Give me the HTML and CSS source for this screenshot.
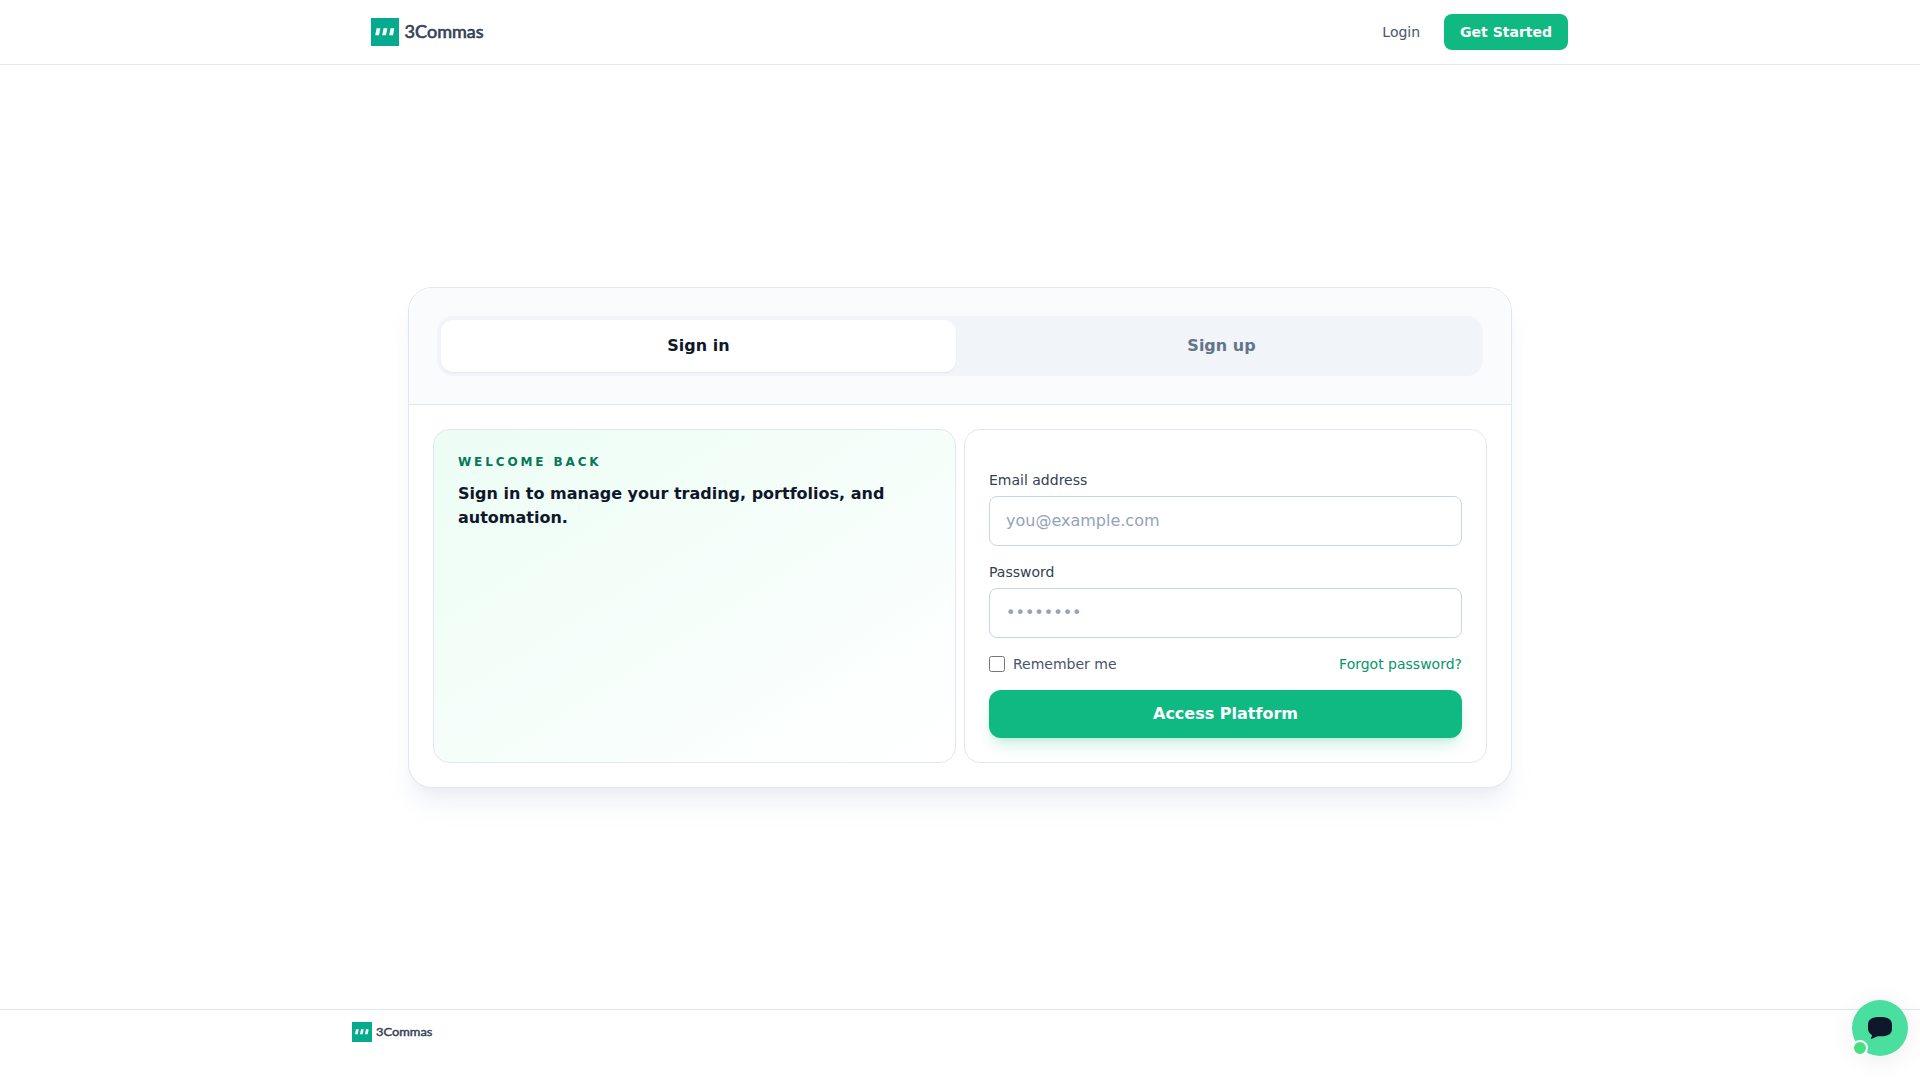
FILE: index.html
```html
<!DOCTYPE html>
<html lang="en">
<head>
<meta charset="utf-8">
<title>3Commas</title>
<link rel="stylesheet" href="styles.css">
</head>
<body>
<header class="topbar">
  <div class="container topbar-inner">
    <a class="brand">
      <svg class="brand-logo" viewBox="0 0 114 28">
        <rect width="28" height="28" fill="#05ab8c"/>
        <path d="M5.600 10.300h3.700l-1.300 6.900H4.200zM12.600 10.300h3.700l-1.300 6.900h-3.800zM19.600 10.300h3.700l-1.300 6.900h-3.800z" fill="#fff"/>
        <text x="33.600" y="20.200" textLength="79" lengthAdjust="spacingAndGlyphs">3Commas</text>
      </svg>
    </a>
    <nav class="nav">
      <a class="nav-link">Login</a>
      <a class="nav-cta">Get Started</a>
    </nav>
  </div>
</header>
<main class="main">
  <section class="card">
    <div class="card-head">
      <div class="tabs">
        <button class="tab tab-active">Sign in</button>
        <button class="tab">Sign up</button>
      </div>
    </div>
    <div class="card-body">
      <div class="panel welcome">
        <p class="eyebrow">Welcome back</p>
        <p class="welcome-title">Sign in to manage your trading, portfolios, and automation.</p>
      </div>
      <form class="panel form">
        <div class="field">
          <label for="email">Email address</label>
          <input class="input" id="email" type="email" placeholder="you@example.com">
        </div>
        <div class="field">
          <label for="password">Password</label>
          <input class="input" id="password" type="password" placeholder="••••••••">
        </div>
        <div class="options">
          <label class="remember"><input class="check" type="checkbox">Remember me</label>
          <a class="forgot">Forgot password?</a>
        </div>
        <button class="submit" type="button">Access Platform</button>
      </form>
    </div>
  </section>
</main>
<footer class="footer">
  <div class="container">
    <svg class="footer-logo" viewBox="0 0 114 28">
      <rect width="28" height="28" fill="#05ab8c"/>
      <path d="M5.600 10.300h3.700l-1.300 6.900H4.200zM12.600 10.300h3.700l-1.300 6.900h-3.800zM19.600 10.300h3.700l-1.300 6.900h-3.800z" fill="#fff"/>
      <text x="33.600" y="20.200" textLength="79" lengthAdjust="spacingAndGlyphs">3Commas</text>
    </svg>
  </div>
</footer>
<button class="chat" aria-label="Open chat">
  <svg class="chat-icon" viewBox="0 0 24 22"><path d="M12 0c8.500 0 12 2.500 12 8v3.500c0 5.500-4.200 7.800-10.500 7.800-1.800 0-3.300-.1-4.500.3-2 .6-3.300 2-5.300 2.200-.9.100-1.100-.8-.6-1.400.8-.9 1-1.600.8-2.400C1.400 16.600 0 14.500 0 11.500V8c0-5.500 3.500-8 12-8z" fill="#0f172a"/></svg>
  <span class="status"></span>
</button>
</body>
</html>
```
FILE: styles.css
```css
* { box-sizing: border-box; }
body {
  margin: 0;
  height: 1080px;
  display: flex;
  flex-direction: column;
  overflow: hidden;
  background: #fff;
  color: #0f172a;
  font: 16px/24px "DejaVu Sans", sans-serif;
}
p { margin: 0; }
button { border: 0; font: inherit; }
.container { width: 1280px; margin: 0 auto; padding: 0 32px; }
.topbar { height: 65px; border-bottom: 1px solid #e2e8f0; }
.topbar-inner { height: 64px; display: flex; align-items: center; justify-content: space-between; }
.brand { display: flex; margin-left: 18.500px; }
.brand-logo { width: 114px; height: 28px; }
.brand-logo text, .footer-logo text { font: 16.800px Lato, sans-serif; fill: #334155; stroke: #334155; stroke-width: .6px; }
.nav { display: flex; align-items: center; gap: 24px; font-size: 14px; line-height: 20px; }
.nav-link { color: #475569; }
.nav-cta { padding: 8px 16px; border-radius: 8px; background: #10b981; color: #fff; font-weight: 600; }
.main { flex: 1; display: flex; align-items: center; justify-content: center; }
.card {
  width: 1104px;
  margin-bottom: -1px;
  border: 1px solid #e2e8f0;
  border-radius: 24px;
  overflow: hidden;
  background: #fff;
  box-shadow: 0 20px 25px -5px rgba(226, 232, 240, .6), 0 8px 10px -6px rgba(226, 232, 240, .6);
}
.card-head { padding: 28px; background: #fafbfd; border-bottom: 1px solid #e2e8f0; }
.tabs { display: grid; grid-template-columns: 1fr 1fr; gap: 8px; padding: 4px; border-radius: 16px; background: #f1f5f9; }
.tab { height: 52px; border-radius: 12px; background: transparent; color: #64748b; font-weight: 600; }
.tab-active { background: #fff; color: #0f172a; box-shadow: 0 1px 2px rgba(15, 23, 42, .06); }
.card-body { display: grid; grid-template-columns: 1fr 1fr; gap: 8px; padding: 24px; }
.panel { padding: 24px; border: 1px solid #e2e8f0; border-radius: 16px; }
.welcome { background: linear-gradient(to bottom right, #ecfdf5, #fff); }
.eyebrow { color: #047857; font-size: 12px; line-height: 16px; font-weight: 600; letter-spacing: .24em; text-transform: uppercase; }
.welcome-title { margin-top: 12px; font-weight: 600; }
.form { display: flex; flex-direction: column; gap: 16px; padding-top: 40px; }
.field { display: flex; flex-direction: column; gap: 6px; color: #334155; font-size: 14px; line-height: 20px; }
.input { height: 50px; padding: 0 16px 1px; border: 1px solid #cbd5e1; border-radius: 8px; background: #fff; font: inherit; font-size: 16px; }
.input::placeholder { color: #94a3b8; }
.options { display: flex; justify-content: space-between; font-size: 14px; line-height: 20px; }
.remember { display: flex; align-items: center; gap: 8px; color: #475569; }
.check { width: 16px; height: 16px; margin: 0; }
.forgot { color: #059669; }
.submit { height: 48px; border-radius: 12px; background: #10b981; color: #fff; font-weight: 600; box-shadow: 0 10px 15px -3px rgba(16, 185, 129, .2), 0 4px 6px -4px rgba(16, 185, 129, .2); }
.footer { height: 71px; padding-top: 12px; border-top: 1px solid #e2e8f0; }
.footer-logo { display: block; width: 81.400px; height: 20px; }
.chat {
  position: fixed;
  right: 12px;
  bottom: 24px;
  width: 56px;
  height: 56px;
  padding: 0;
  display: grid;
  place-items: center;
  border-radius: 50%;
  background: #4ade9f;
  box-shadow: 0 4px 24px rgba(15, 23, 42, .08);
}
.chat-icon { width: 24px; height: 22px; }
.status { position: absolute; left: 0; bottom: 0; width: 16px; height: 16px; border: 2px solid #fff; border-radius: 50%; background: #4ade80; }
```
